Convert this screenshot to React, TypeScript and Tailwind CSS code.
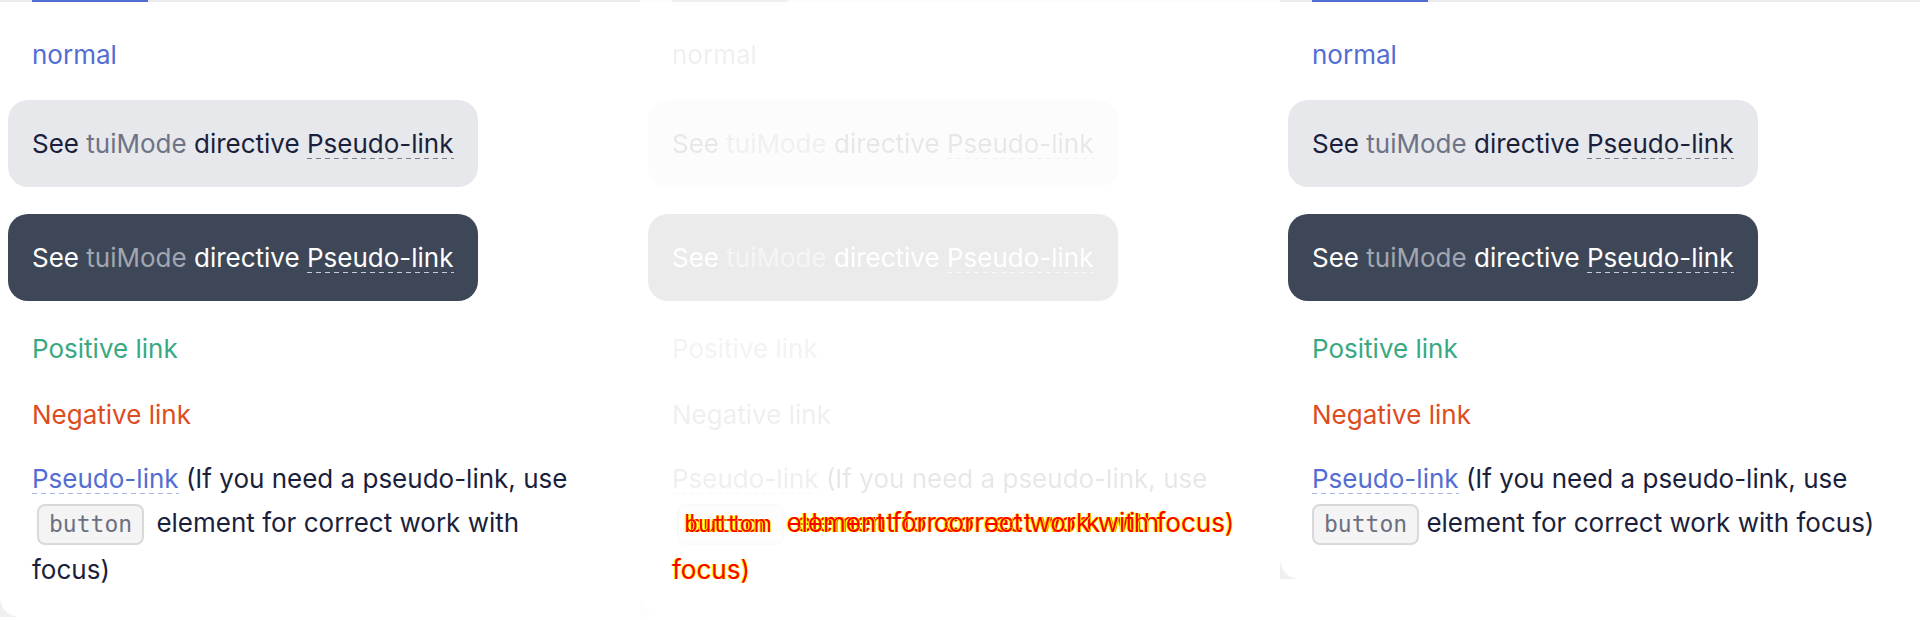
const SANS = "[font-family:Inter,sans-serif]";
const MONO = "[font-family:'DejaVu_Sans_Mono',monospace]";

const DASH_GRAY = "[background:linear-gradient(to_right,#7a7e8c_60%,transparent_60%)_0_100%/9px_1px_repeat-x]";
const DASH_LIGHT = "[background:linear-gradient(to_right,#c9ccd3_60%,transparent_60%)_0_100%/9px_1px_repeat-x]";
const DASH_BLUE = "[background:linear-gradient(to_right,#a7b5ee_60%,transparent_60%)_0_100%/9px_1px_repeat-x]";

type Mode = "normal" | "faded" | "diff";

function ModeBox({ dark }: { dark?: boolean }) {
  return (
    <div
      className={
        dark
          ? "-mx-6 flex h-[87px] w-fit items-center rounded-[20px] bg-[#3e4757] px-6 text-white"
          : "-mx-6 flex h-[87px] w-fit items-center rounded-[20px] bg-[#e6e8ec] px-6 text-[#1b1f3b]"
      }
    >
      <p>
        See <span className={dark ? "text-[#a2a6b0]" : "text-[#6f7386]"}>tuiMode</span> directive{" "}
        <span className={dark ? DASH_LIGHT : DASH_GRAY}>Pseudo-link</span>
      </p>
    </div>
  );
}

function Panel({ mode = "normal", wide }: { mode?: Mode; wide?: boolean }) {
  // diff mode paints only the part that differs between the two layouts
  const rest =
    mode === "diff"
      ? "visible text-[#ff0000] [text-shadow:1px_0_#ffff00,-1px_0_#ffff00]"
      : mode === "faded"
        ? "text-transparent"
        : "";
  return (
    <div className={`w-[640px] shrink-0 ${SANS} text-[26px] leading-[44px]`}>
      <div className="h-[2px] bg-[#ebebeb]">
        <div className="ml-8 h-full w-[116px] bg-[#526ed3]" />
      </div>
      <div className="bg-[#efeff0]">
        <div
          className={
            wide
              ? "flex h-[577px] flex-col rounded-bl-[20px] bg-white px-8"
              : "flex h-[615px] flex-col rounded-bl-[20px] bg-white px-8"
          }
        >
          <p className="pt-[31px] text-[#526ed3]">normal</p>
          <div className="mt-[23px]">
            <ModeBox />
          </div>
          <div className="mt-[27px]">
            <ModeBox dark />
          </div>
          <p className="mt-[26px] text-[#3aa981]">Positive link</p>
          <p className="mt-[22px] text-[#dd4c1e]">Negative link</p>
          <p
            className={
              wide
                ? "mt-[21px] w-[600px] leading-[42px] text-[#1b1f3b]"
                : "mt-[21px] w-[570px] leading-[42px] text-[#1b1f3b]"
            }
          >
            <span className={`text-[#526ed3] ${DASH_BLUE}`}>Pseudo-link</span> (If you need a pseudo-link, use{" "}
            <code
              className={
                wide
                  ? `my-[4px] inline-block rounded-[8px] border-2 border-[#d9d9dc] bg-[#f4f4f5] px-[10px] py-[5px] align-middle text-[23px] leading-[27px] text-[#6c7080] ${MONO}`
                  : `mx-[5px] my-[4px] inline-block rounded-[8px] border-2 border-[#d9d9dc] bg-[#f4f4f5] px-[10px] py-[5px] align-middle text-[23px] leading-[27px] text-[#6c7080] ${MONO}`
              }
            >
              <span className={rest}>button</span>
            </code>{" "}
            <span className={rest}>element for correct work with focus)</span>
          </p>
        </div>
      </div>
    </div>
  );
}

export default function App() {
  return (
    <div className="flex h-[620px] w-[1920px] overflow-hidden bg-white">
      <Panel />
      <div className="relative w-[640px] shrink-0">
        <div className="opacity-10 grayscale">
          <Panel mode="faded" />
        </div>
        <div className="invisible absolute inset-0">
          <Panel mode="diff" />
        </div>
        <div className="invisible absolute inset-0">
          <Panel mode="diff" wide />
        </div>
      </div>
      <Panel wide />
    </div>
  );
}
